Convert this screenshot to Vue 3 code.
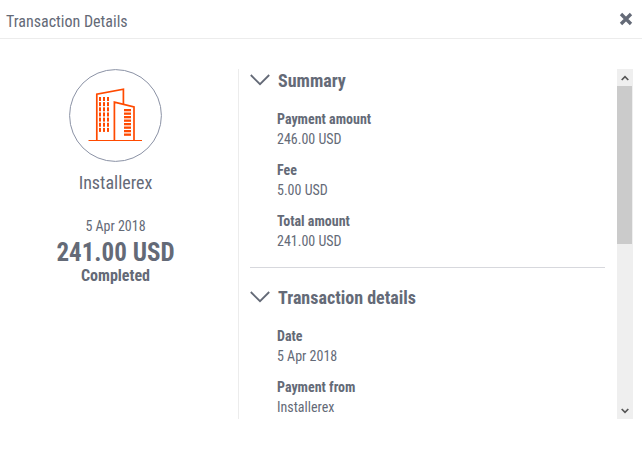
<script setup>
import { ref } from 'vue'

const sections = [
  {
    title: 'Summary',
    rows: [
      { label: 'Payment amount', value: '246.00 USD' },
      { label: 'Fee', value: '5.00 USD' },
      { label: 'Total amount', value: '241.00 USD' },
    ],
  },
  {
    title: 'Transaction details',
    rows: [
      { label: 'Date', value: '5 Apr 2018' },
      { label: 'Payment from', value: 'Installerex' },
    ],
  },
]

const open = ref(sections.map(() => true))
const pane = ref(null)
const windowRows = [0, 1, 2, 3, 4, 5, 6]
const windowCols = [0, 1, 2]
const blinds = [0, 1, 2, 3, 4, 5, 6, 7]

function scroll(amount) {
  pane.value.scrollBy({ top: amount })
}
</script>

<template>
  <div class="dialog" role="dialog" aria-labelledby="dialog-title">
    <header class="bar">
      <h1 id="dialog-title">Transaction Details</h1>
      <button class="close" type="button" aria-label="Close">
        <svg width="14" height="14" viewBox="0 0 14 14">
          <path d="M2 2L12 12M12 2L2 12" fill="none" stroke="currentColor" stroke-width="3.3" />
        </svg>
      </button>
    </header>

    <main class="body">
      <section class="party">
        <svg class="logo" width="93" height="93" viewBox="0 0 93 93" aria-hidden="true">
          <circle cx="46.5" cy="46.5" r="45.9" fill="#fff" stroke="#8b92a5" />
          <g fill="none" stroke="#ff4a00" stroke-width="1.7">
            <path d="M19.5 71.5H73" stroke-width="1.2" />
            <path d="M27.8 71.5V25.2L54.4 20.2V35" />
            <path d="M45.4 71.5V33.2L65 38V71.5" />
          </g>
          <g fill="#ff4a00">
            <template v-for="r in windowRows" :key="r">
              <rect v-for="c in windowCols" :key="c" :x="30 + c * 4" :y="28 + r * 5.15" width="2" height="4" />
            </template>
            <rect v-for="b in blinds" :key="'b' + b" x="55" :y="40 + b * 3.5" width="7" height="2.3" />
          </g>
        </svg>
        <h2>Installerex</h2>
        <p class="date">5 Apr 2018</p>
        <p class="amount">241.00 USD</p>
        <p class="status">Completed</p>
      </section>

      <div class="details">
        <div ref="pane" class="pane">
          <section v-for="(section, i) in sections" :key="section.title" class="group">
            <h2>
              <button type="button" class="toggle" :aria-expanded="open[i]" @click="open[i] = !open[i]">
                <svg width="20" height="14" viewBox="0 0 20 14" aria-hidden="true">
                  <path d="M0.8 1L10 10.2L19.2 1" fill="none" stroke="currentColor" stroke-width="1.8" />
                </svg>
                {{ section.title }}
              </button>
            </h2>
            <dl v-if="open[i]">
              <div v-for="row in section.rows" :key="row.label">
                <dt>{{ row.label }}</dt>
                <dd>{{ row.value }}</dd>
              </div>
            </dl>
          </section>
        </div>
        <div class="scrollbar">
          <button type="button" aria-label="Scroll up" @click="scroll(-40)">
            <svg width="8" height="6" viewBox="0 0 8 6"><path d="M0.7 5L4 1.7L7.3 5" fill="none" stroke="currentColor" stroke-width="1.7" /></svg>
          </button>
          <div class="track"><div class="thumb"></div></div>
          <button type="button" aria-label="Scroll down" @click="scroll(40)">
            <svg width="8" height="6" viewBox="0 0 8 6"><path d="M0.7 1L4 4.3L7.3 1" fill="none" stroke="currentColor" stroke-width="1.7" /></svg>
          </button>
        </div>
      </div>
    </main>
  </div>
</template>

<style>
body {
  background: #fff;
}
</style>

<style scoped>
.dialog {
  display: flex;
  flex-direction: column;
  height: 100vh;
  color: #646a77;
  font-family: "Roboto Condensed", "Liberation Sans Narrow", Roboto, sans-serif;
  font-size: 14px;
  line-height: 20px;
}

h1,
h2,
p,
dl,
dd {
  margin: 0;
}

button {
  padding: 0;
  border: 0;
  background: none;
  color: inherit;
  font: inherit;
  cursor: pointer;
}

.bar {
  display: flex;
  align-items: flex-start;
  justify-content: space-between;
  padding: 12px 9px 6px 6px;
  border-bottom: 1px solid #ececec;
}

.bar h1 {
  font-size: 16px;
  font-weight: 400;
  line-height: 20px;
}

.close {
  display: flex;
}

.body {
  flex: 1;
  display: grid;
  grid-template-columns: 239px 1fr;
  min-height: 0;
  padding: 30px 9px 44px 0;
}

.party {
  display: flex;
  flex-direction: column;
  align-items: center;
  padding-right: 7px;
  border-right: 1px solid #ececec;
  text-align: center;
}

.party h2 {
  margin: 9px 0 21px;
  font-size: 18px;
  font-weight: 400;
  line-height: 24px;
}

.party .date {
  padding-bottom: 4px;
}

.party .amount {
  font-size: 25px;
  font-weight: 700;
  line-height: 26px;
}

.party .status {
  font-size: 16px;
  font-weight: 700;
}

.details {
  display: flex;
  gap: 12px;
  min-width: 0;
  min-height: 0;
  padding-left: 11px;
}

.pane {
  flex: 1;
  overflow: auto;
  scrollbar-width: none;
}

.group + .group {
  margin-top: 16px;
  padding-top: 18px;
  border-top: 1px solid #d7d8dd;
}

.group h2 {
  font-size: 18px;
  font-weight: 700;
  line-height: 24px;
}

.toggle {
  display: flex;
  align-items: center;
  gap: 8px;
}

dl {
  display: grid;
  gap: 11px;
  padding: 16px 0 0 27px;
}

dt {
  font-weight: 700;
}

.scrollbar {
  display: flex;
  flex-direction: column;
  width: 16px;
  background: #efefef;
  color: #555;
}

.scrollbar button {
  display: flex;
  align-items: center;
  justify-content: center;
  height: 17px;
}

.track {
  flex: 1;
}

.thumb {
  width: 15px;
  height: 50%;
  background: #cbcbcb;
}
</style>
